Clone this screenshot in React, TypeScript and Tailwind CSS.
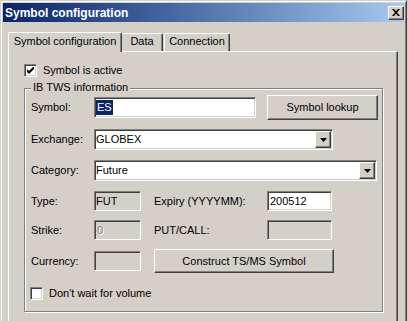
import React from "react";

const raised =
  "border border-t-white border-l-white border-r-[#404040] border-b-[#404040] shadow-[inset_-1px_-1px_0_#808080] bg-[#d4d0c8]";
const sunken =
  "border border-t-[#808080] border-l-[#808080] border-r-white border-b-white shadow-[inset_1px_1px_0_#404040,inset_-1px_-1px_0_#d4d0c8]";

const Field = ({
  w,
  h = "h-[20px]",
  white,
  children,
}: {
  w: string;
  h?: string;
  white?: boolean;
  children?: React.ReactNode;
}) => (
  <div className={`${w} ${h} ${sunken} ${white ? "bg-white" : "bg-[#d4d0c8]"} flex items-center pl-[1px] leading-none`}>
    {children}
  </div>
);

const Combo = ({ w, value }: { w: string; value: string }) => (
  <div className={`${w} h-[21px] ${sunken} bg-white flex items-center justify-between pl-[1px] pr-[1px]`}>
    <span className="leading-none">{value}</span>
    <div className={`w-[16px] h-[17px] ${raised} flex items-center justify-center`}>
      <svg width="7" height="4" viewBox="0 0 7 4">
        <polygon points="0,0 7,0 3.5,4" fill="#000" />
      </svg>
    </div>
  </div>
);

const Button = ({ w, h, label }: { w: string; h: string; label: string }) => (
  <div className={`${w} ${h} ${raised} flex items-center justify-center leading-none`}>{label}</div>
);

const CheckBox = ({ checked, label }: { checked?: boolean; label: string }) => (
  <div className="flex items-center">
    <div className={`w-[13px] h-[13px] ${sunken} bg-white flex items-center justify-center`}>
      {checked && (
        <svg width="7" height="7" viewBox="0 0 7 7">
          <polygon points="0,2 2,4 7,-1 7,2 2,7 0,5" fill="#000" />
        </svg>
      )}
    </div>
    <span className="ml-[6px] leading-none">{label}</span>
  </div>
);

const Label = ({ w = "w-[63px]", children }: { w?: string; children: React.ReactNode }) => (
  <div className={`${w} shrink-0 leading-none`}>{children}</div>
);

export default function App() {
  return (
    <div className="w-[408px] h-[321px] overflow-hidden bg-[#d4d0c8] text-[11px] text-black font-['Liberation_Sans',Arial,sans-serif]">
      <div className="w-[407px] h-[340px] border border-[#d4d0c8] border-r-[#404040] shadow-[inset_1px_1px_0_white,inset_-1px_0_0_#808080] p-[2px]">
        {/* title bar */}
        <div className="h-[19px] flex items-center justify-between pl-[2px] pr-[0px] bg-gradient-to-r from-[#0a246a] to-[#a6caf0]">
          <span className="text-white font-bold text-[12px] leading-none">Symbol configuration</span>
          <div className={`w-[16px] h-[14px] ${raised} flex items-center justify-center`}>
            <svg width="8" height="7" viewBox="0 0 8 7">
              <path d="M0 0h2l2 2.3L6 0h2L5 3.5 8 7H6L4 4.7 2 7H0l3-3.5z" fill="#000" />
            </svg>
          </div>
        </div>

        {/* tabs */}
        <div className="pl-[5px] pt-[9px]">
          <div className="flex items-end h-[20px] relative z-10">
            <div className="w-[114px] h-[20px] -mb-[1px] bg-[#d4d0c8] border-l border-t border-white border-r border-r-[#404040] shadow-[inset_-1px_0_0_#808080] rounded-t-[2px] flex items-center justify-center pb-[3px]">
              <span className="leading-none">Symbol configuration</span>
            </div>
            <div className="w-[41px] h-[18px] border-t border-white border-r border-r-[#404040] shadow-[inset_-1px_0_0_#808080] rounded-t-[2px] flex items-center justify-center pb-[2px]">
              <span className="leading-none">Data</span>
            </div>
            <div className="ml-[1px] w-[66px] h-[18px] border-l border-t border-white border-r border-r-[#404040] shadow-[inset_-1px_0_0_#808080] rounded-t-[2px] flex items-center justify-center pb-[2px]">
              <span className="leading-none">Connection</span>
            </div>
          </div>

          {/* tab panel */}
          <div className="w-[390px] h-[290px] border-l border-t border-white border-r border-r-[#404040] shadow-[inset_-1px_0_0_#808080] pl-[15px] pt-[12px]">
            <CheckBox checked label="Symbol is active" />

            <div className="relative mt-[11px] w-[359px] h-[224px] border border-[#808080] shadow-[inset_1px_1px_0_white,1px_1px_0_white] pl-[6px] pt-[6px]">
              <span className="absolute left-[6px] -top-[7px] px-[2px] bg-[#d4d0c8] leading-none">IB TWS information</span>

              <div className="flex items-center h-[25px]">
                <Label>Symbol:</Label>
                <Field w="w-[162px]" h="h-[21px]" white>
                  <span className="bg-[#0a246a] text-white px-[1px] py-[2px]">ES</span>
                </Field>
                <div className="ml-[11px]">
                  <Button w="w-[111px]" h="h-[25px]" label="Symbol lookup" />
                </div>
              </div>

              <div className="flex items-center h-[21px] mt-[9px]">
                <Label>Exchange:</Label>
                <Combo w="w-[239px]" value="GLOBEX" />
              </div>

              <div className="flex items-center h-[21px] mt-[10px]">
                <Label>Category:</Label>
                <Combo w="w-[283px]" value="Future" />
              </div>

              <div className="flex items-center h-[20px] mt-[10px]">
                <Label>Type:</Label>
                <Field w="w-[47px]">FUT</Field>
                <div className="ml-[13px]">
                  <Label w="w-[113px]">Expiry (YYYYMM):</Label>
                </div>
                <Field w="w-[65px]" white>
                  <span className="pl-[1px]">200512</span>
                </Field>
              </div>

              <div className="flex items-center h-[20px] mt-[9px]">
                <Label>Strike:</Label>
                <Field w="w-[47px]">
                  <span className="pl-[1px] text-[#808080] [text-shadow:1px_1px_0_white]">0</span>
                </Field>
                <div className="ml-[13px]">
                  <Label w="w-[113px]">PUT/CALL:</Label>
                </div>
                <Field w="w-[65px]" />
              </div>

              <div className="flex items-center h-[24px] mt-[9px]">
                <Label>Currency:</Label>
                <Field w="w-[47px]" />
                <div className="ml-[13px]">
                  <Button w="w-[180px]" h="h-[24px]" label="Construct TS/MS Symbol" />
                </div>
              </div>

              <div className="mt-[14px] -ml-[1px]">
                <CheckBox label="Don't wait for volume" />
              </div>
            </div>
          </div>
        </div>
      </div>
    </div>
  );
}
